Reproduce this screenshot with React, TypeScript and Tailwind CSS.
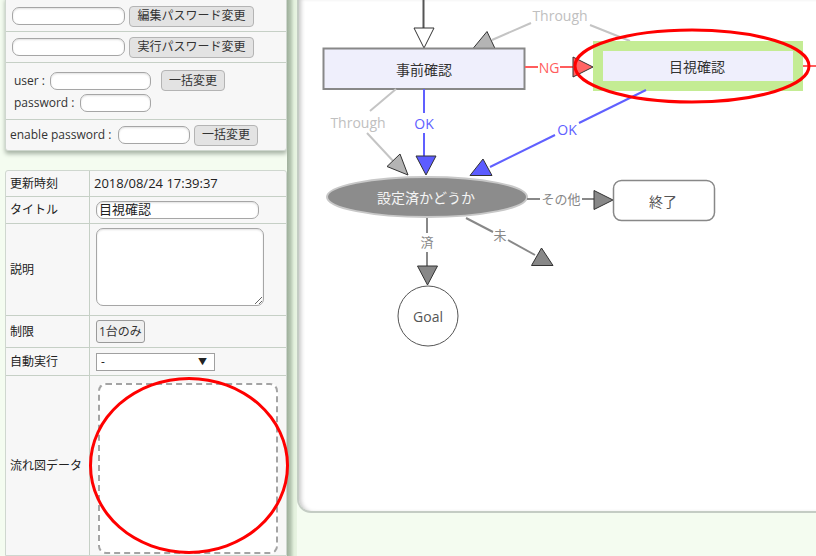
import React from "react";

const FONT = "font-['Open_Sans','Noto_Sans_CJK_JP',sans-serif]";
const SVG_FONT = "'Open Sans','Noto Sans CJK JP',sans-serif";

function TextInput({ className = "", value = "" }: { className?: string; value?: string }) {
  return (
    <input
      readOnly
      defaultValue={value}
      className={`h-[18px] rounded-[7px] border border-[#a6a6a6] bg-white px-[2px] text-[13px] text-[#222] shadow-[inset_0_1px_2px_rgba(0,0,0,0.12)] outline-none ${className}`}
    />
  );
}

function Btn({ children, className = "" }: { children: React.ReactNode; className?: string }) {
  return (
    <button
      className={`flex h-[21px] items-center justify-center rounded-[4px] border border-[#b4b4b4] bg-[#e3e3e3] text-[12px] leading-none text-[#333] ${className}`}
    >
      {children}
    </button>
  );
}

function Diagram() {
  const label = (x: number, y: number, text: string, fill: string, size = 14) => (
    <text
      x={x}
      y={y}
      fill={fill}
      fontSize={size}
      fontFamily={SVG_FONT}
      textAnchor="middle"
      dominantBaseline="central"
    >
      {text}
    </text>
  );

  return (
    <svg className="absolute inset-0 h-full w-full" width="517" height="511">
      <g transform="translate(-299,0)">
        {/* entry */}
        <line x1="423.5" y1="0" x2="423.5" y2="28" stroke="#555" strokeWidth="2" />
        <polygon points="414,28 434,28 424,48" fill="#fff" stroke="#333" />

        {/* Through (upper) */}
        <line x1="630" y1="41" x2="590" y2="25" stroke="#c4c4c4" strokeWidth="2" />
        {label(560, 15, "Through", "#c0c0c0")}
        <line x1="531" y1="23" x2="492" y2="40" stroke="#c4c4c4" strokeWidth="2" />
        <polygon points="473,48.5 495,48.5 487,31.5" fill="#b4b4b4" stroke="#333" />

        {/* 事前確認 */}
        <rect x="323.5" y="48.5" width="201" height="40.5" fill="#efeffc" stroke="#888" strokeWidth="2" />
        {label(424, 69, "事前確認", "#333")}

        {/* NG */}
        <line x1="525" y1="67" x2="538" y2="67" stroke="#ff5c5c" strokeWidth="2" />
        {label(549, 67, "NG", "#ff5c5c")}
        <line x1="560" y1="67" x2="573" y2="67" stroke="#ff5c5c" strokeWidth="2" />
        <polygon points="573,57 573,77 593,67" fill="#ff6464" stroke="#333" />

        {/* 目視確認 */}
        <rect x="593" y="41" width="210" height="50" fill="#c4ec94" />
        <rect x="603" y="51" width="190" height="30" fill="#efeffc" />
        {label(697, 66, "目視確認", "#333")}
        <line x1="803" y1="66" x2="816" y2="66" stroke="#ff5c5c" strokeWidth="2" />

        {/* OK straight */}
        <line x1="424" y1="89" x2="424" y2="113" stroke="#6060ff" strokeWidth="2" />
        {label(424, 123, "OK", "#6060ff")}
        <line x1="424" y1="133" x2="424" y2="156" stroke="#6060ff" strokeWidth="2" />
        <polygon points="416,156 436,156 426,175" fill="#5c5cff" stroke="#333" />

        {/* OK diagonal */}
        <line x1="646" y1="90" x2="579" y2="123" stroke="#6060ff" strokeWidth="2" />
        {label(567, 129, "OK", "#6060ff")}
        <line x1="555" y1="135" x2="490" y2="167" stroke="#6060ff" strokeWidth="2" />
        <polygon points="470,175.5 492,175.5 483,159" fill="#5c5cff" stroke="#333" />

        {/* Through (left) */}
        <line x1="396" y1="89" x2="370" y2="111" stroke="#c4c4c4" strokeWidth="2" />
        {label(358, 122, "Through", "#c0c0c0")}
        <line x1="367" y1="133" x2="395" y2="163" stroke="#c4c4c4" strokeWidth="2" />
        <polygon points="387,166.5 408,175 400,154" fill="#b4b4b4" stroke="#333" />

        {/* 設定済かどうか */}
        <ellipse cx="427" cy="197" rx="100" ry="20" fill="#8c8c8c" stroke="#c8c8c8" strokeWidth="2" />
        {label(426, 197, "設定済かどうか", "#f4f4f4")}

        {/* その他 */}
        <line x1="527" y1="199" x2="540" y2="199" stroke="#888" strokeWidth="2" />
        {label(561, 199, "その他", "#888", 13)}
        <line x1="582" y1="199" x2="594" y2="199" stroke="#888" strokeWidth="2" />
        <polygon points="594,190.5 594,209.5 613,200" fill="#888" stroke="#333" />
        <rect x="613.5" y="180.5" width="101" height="40" rx="8" fill="#fff" stroke="#888" strokeWidth="1.5" />
        {label(663, 201, "終了", "#555")}

        {/* 済 */}
        <line x1="427" y1="218" x2="427" y2="233" stroke="#888" strokeWidth="2" />
        {label(427, 242, "済", "#888", 13)}
        <line x1="427" y1="252" x2="427" y2="266" stroke="#888" strokeWidth="2" />
        <polygon points="417.5,266 437.5,266 427.5,285" fill="#888" stroke="#333" />

        {/* 未 */}
        <line x1="466" y1="218" x2="493" y2="232" stroke="#888" strokeWidth="2" />
        {label(500, 235, "未", "#888", 13)}
        <line x1="508" y1="240" x2="535" y2="255" stroke="#888" strokeWidth="2" />
        <polygon points="531.5,265.5 553,265.5 541.5,248" fill="#888" stroke="#333" />

        {/* Goal */}
        <circle cx="428" cy="316" r="30" fill="#fff" stroke="#555" />
        {label(428, 316, "Goal", "#555")}

        {/* annotation */}
        <ellipse cx="692" cy="66" rx="117" ry="36" fill="none" stroke="#ff0000" strokeWidth="3" />
      </g>
    </svg>
  );
}

export default function App() {
  const cellL = "flex items-center border-r border-b border-[#c6d0c6] pl-[4px] text-[12px] text-[#222]";
  const cellR = "flex items-center border-b border-[#c6d0c6]";

  return (
    <div className={`relative flex h-[556px] w-[816px] overflow-hidden bg-[#f4fcf0] ${FONT}`}>
      {/* left column */}
      <div className="flex w-[287px] shrink-0 flex-col pl-[5px]">
        {/* password panel */}
        <div className="-mt-[3px] rounded-b-[3px] border border-[#cfd7cf] bg-[#f7f7f7] shadow-[0_3px_4px_#a9b5a7] text-[12px] text-[#333]">
          <div className="flex h-[34px] items-center gap-[4px] border-b border-[#c6d0c6] pl-[6px] pt-[3px]">
            <TextInput className="w-[113px]" />
            <Btn className="w-[125px]">編集パスワード変更</Btn>
          </div>
          <div className="flex h-[31px] items-center gap-[4px] border-b border-[#c6d0c6] pl-[6px]">
            <TextInput className="w-[113px]" />
            <Btn className="w-[125px]">実行パスワード変更</Btn>
          </div>
          <div className="flex h-[57px] flex-col justify-center gap-[3px] border-b border-[#c6d0c6] pl-[8px]">
            <div className="flex items-center">
              <span className="w-[36px]">user :</span>
              <TextInput className="w-[101px]" />
              <Btn className="ml-[10px] w-[64px]">一括変更</Btn>
            </div>
            <div className="flex items-center">
              <span className="w-[66px]">password :</span>
              <TextInput className="w-[71px]" />
            </div>
          </div>
          <div className="flex h-[30px] items-center pl-[4px]">
            <span className="w-[108px]">enable password :</span>
            <TextInput className="w-[72px]" />
            <Btn className="ml-[4px] w-[64px]">一括変更</Btn>
          </div>
        </div>

        {/* properties panel */}
        <div className="mt-[19px] grid flex-1 grid-cols-[84px_1fr] grid-rows-[26px_27px_92px_32px_28px_1fr] rounded-t-[3px] border border-[#cfd7cf] bg-[#f7f7f7]">
          <div className={cellL}>更新時刻</div>
          <div className={`${cellR} pl-[4px] text-[13px] text-[#222]`}>2018/08/24 17:39:37</div>

          <div className={cellL}>タイトル</div>
          <div className={`${cellR} pl-[6px]`}>
            <TextInput className="w-[163px] text-[#222]" value="目視確認" />
          </div>

          <div className={cellL}>説明</div>
          <div className="border-b border-[#c6d0c6] pl-[6px] pt-[4px]">
            <textarea
              readOnly
              className="block h-[78px] w-[168px] rounded-[7px] border border-[#a6a6a6] bg-white shadow-[inset_0_1px_2px_rgba(0,0,0,0.12)] outline-none"
            />
          </div>

          <div className={cellL}>制限</div>
          <div className={`${cellR} pl-[6px]`}>
            <button className="h-[23px] rounded-[3px] border border-[#9a9a9a] bg-[#f0f0f0] px-[2px] text-[12px] text-[#333]">
              1台のみ
            </button>
          </div>

          <div className={cellL}>自動実行</div>
          <div className={`${cellR} pl-[6px]`}>
            <div className="flex h-[18px] w-[119px] items-center justify-between border border-[#a0a0a0] bg-white pl-[4px] pr-[7px] text-[12px] text-[#222]">
              <span>-</span>
              <span className="text-[9px]">▼</span>
            </div>
          </div>

          <div className="flex items-center border-r border-[#c6d0c6] pl-[4px] text-[12px] text-[#222]">流れ図データ</div>
          <div className="pl-[8px] pt-[7px]">
            <div className="h-[171px] w-[180px] rounded-[8px] border-2 border-dashed border-[#a4a4a4] bg-white" />
          </div>
        </div>
      </div>

      {/* splitter */}
      <div className="w-[10px] shrink-0 bg-[linear-gradient(to_right,#9fb09c,#b6c6b2_35%,#e2f0dc_70%,#e8f4e2)]" />

      {/* diagram panel */}
      <div className="relative h-[513px] flex-1 overflow-hidden rounded-bl-[14px] border-b-2 border-l-2 border-[#c4ccc4] bg-white shadow-[inset_4px_0_4px_-2px_#c8c8c8]">
        <Diagram />
      </div>

      {/* annotation over flow data */}
      <div className="pointer-events-none absolute left-[89px] top-[377px] h-[177px] w-[200px] rounded-[50%] border-[3px] border-[#ff0000]" />
    </div>
  );
}
